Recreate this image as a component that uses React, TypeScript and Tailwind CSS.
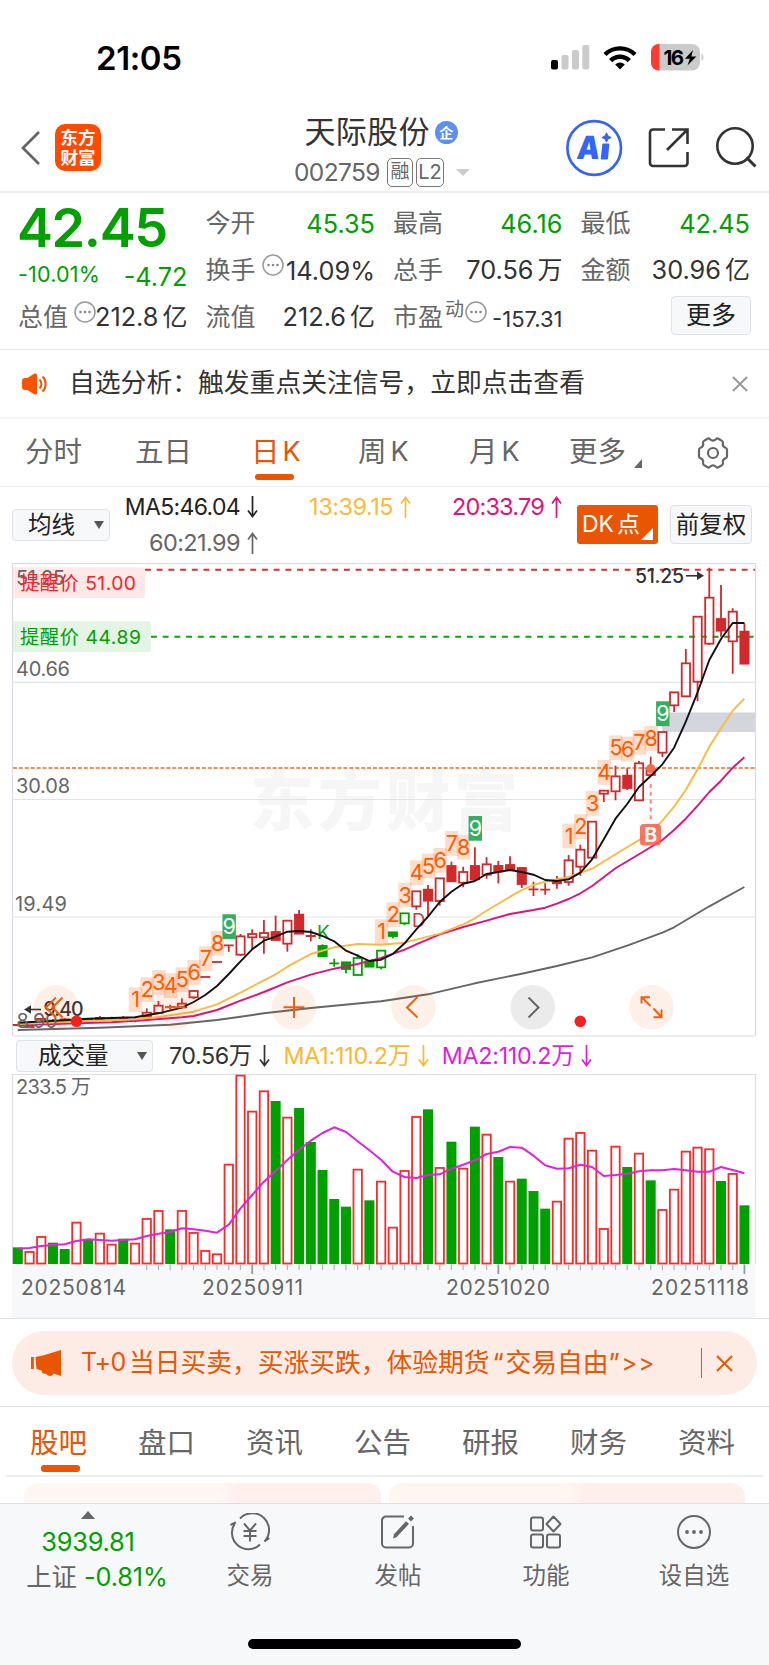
import React from "react";

const X0 = 17.8;
const STEP = 11.72;
const bx = (i: number) => X0 + STEP * i;

// G = filled green, R = outlined red; the number is the bar top in thirds of a px
const volumes: [string, number][] = [
  ["G", 547], ["R", 560], ["R", 515], ["G", 533], ["G", 552], ["R", 472], ["G", 523], ["R", 505], ["R", 538], ["G", 521],
  ["R", 535], ["R", 461], ["R", 437], ["G", 493], ["R", 437], ["R", 503], ["R", 557], ["R", 567], ["R", 298], ["R", 31],
  ["R", 139], ["R", 78], ["G", 108], ["R", 157], ["G", 129], ["G", 231], ["G", 315], ["G", 402], ["G", 425], ["R", 313],
  ["G", 406], ["R", 349], ["R", 487], ["R", 317], ["R", 155], ["G", 133], ["R", 308], ["G", 230], ["R", 310], ["G", 185],
  ["R", 208], ["G", 276], ["R", 349], ["G", 341], ["G", 378], ["G", 431], ["R", 409], ["R", 220], ["R", 203], ["R", 256],
  ["R", 491], ["R", 244], ["G", 306], ["R", 265], ["G", 346], ["R", 434], ["R", 373], ["R", 259], ["R", 247], ["R", 252],
  ["G", 348], ["R", 326], ["G", 421],
];

const volMa = [
  551, 549, 543, 540, 538, 528, 523, 525, 527, 525, 523, 513, 506, 501, 490, 493, 497, 503, 479, 430, 390, 350, 318, 285,
  254, 227, 204, 187, 201, 229, 256, 284, 320, 336, 339, 330, 328, 311, 299, 286, 267, 260, 246, 248, 272, 301, 311, 310,
  299, 306, 333, 330, 326, 319, 316, 316, 312, 316, 320, 320, 306, 315, 325,
];

type Candle = [number, "r" | "R" | "g" | "G" | "x" | "X", number, number, number, number];
// index, kind, body top, body bottom, wick top, wick bottom (thirds of a px from y=800)
const candles: Candle[] = [
  [0, "x", 675, 675, 672, 678], [1, "R", 675, 681, 675, 681], [2, "x", 657, 657, 654, 666], [3, "x", 662, 662, 657, 668],
  [4, "R", 658, 664, 655, 668], [5, "x", 664, 664, 660, 668], [6, "x", 660, 660, 656, 663], [7, "R", 654, 660, 648, 662],
  [8, "x", 656, 656, 650, 660], [9, "x", 654, 654, 648, 660], [10, "x", 661, 661, 655, 667],
  [11, "r", 638, 650, 625, 650], [12, "r", 617, 639, 603, 639], [13, "x", 621, 621, 614, 628], [14, "r", 611, 622, 595, 622],
  [15, "r", 573, 592, 570, 597], [16, "x", 531, 531, 531, 531], [17, "x", 486, 486, 486, 486], [18, "x", 436, 436, 436, 455],
  [19, "r", 409, 464, 402, 468], [20, "r", 402, 412, 388, 450], [21, "r", 399, 412, 360, 461], [22, "R", 396, 420, 347, 420],
  [23, "r", 362, 431, 362, 455], [24, "R", 344, 401, 330, 401], [25, "x", 408, 408, 388, 424], [26, "G", 438, 469, 433, 469],
  [27, "X", 490, 490, 476, 500], [28, "G", 487, 507, 487, 520], [29, "g", 474, 525, 463, 525], [30, "G", 484, 500, 484, 500],
  [31, "g", 452, 502, 452, 508], [32, "G", 397, 408, 397, 415], [33, "g", 340, 370, 340, 375], [34, "r", 274, 319, 274, 329],
  [35, "R", 269, 302, 255, 350], [36, "r", 235, 303, 235, 317], [37, "R", 198, 244, 185, 244], [38, "r", 216, 248, 200, 262],
  [39, "R", 198, 238, 142, 238], [40, "r", 193, 224, 172, 236], [41, "R", 198, 214, 183, 250], [42, "R", 195, 208, 169, 208],
  [43, "R", 204, 252, 202, 264], [44, "x", 268, 268, 245, 288], [45, "x", 269, 269, 250, 284], [46, "r", 246, 250, 228, 266],
  [47, "r", 181, 246, 165, 257], [48, "r", 149, 200, 134, 227], [49, "r", 65, 173, 65, 178], [50, "r", -28, -19, -28, 6],
  [51, "r", -71, -26, -103, 1], [52, "R", -73, -36, -95, -30], [53, "r", -110, 1, -117, 1], [54, "r", -93, -75, -130, -75],
  [55, "r", -204, -142, -204, -129], [56, "r", -323, -284, -323, -264], [57, "r", -410, -311, -453, -311],
  [58, "r", -550, -355, -550, -297], [59, "r", -607, -469, -697, -465], [60, "R", -543, -508, -645, -490],
  [61, "r", -565, -476, -575, -379], [62, "R", -505, -409, -530, -409],
];

// [bar index, y in thirds from 800, digit]
const marks: [number, number, string][] = [
  [10, 599, "1"], [11, 569, "2"], [12, 547, "3"], [13, 557, "4"], [14, 539, "5"], [15, 517, "6"], [16, 476, "7"], [17, 430, "8"], [18, 380, "9"],
  [31, 395, "1"], [32, 344, "2"], [33, 285, "3"], [34, 218, "4"], [35, 198, "5"], [36, 181, "6"], [37, 130, "7"], [38, 142, "8"], [39, 85, "9"],
  [47, 108, "1"], [48, 80, "2"], [49, 10, "3"], [50, -83, "4"], [51, -157, "5"], [52, -153, "6"], [53, -173, "7"], [54, -185, "8"], [55, -259, "9"],
];

const ma5: [number, number][] = [
  [0, 668], [4, 661], [6, 656], [8, 654], [10, 652], [12, 640], [14, 623], [15, 606], [16, 585], [17, 558], [18, 522], [19, 484], [20, 448],
  [21, 422], [22, 410], [23, 395], [24, 393], [25, 396], [26, 408], [27, 424], [28, 452], [29, 467], [30, 483], [31, 479], [32, 462], [33, 430],
  [34, 388], [35, 350], [36, 306], [37, 275], [38, 251], [39, 243], [40, 222], [41, 216], [42, 210], [43, 216], [44, 224], [45, 240], [46, 243],
  [47, 238], [48, 218], [49, 178], [50, 118], [51, 56], [52, 12], [53, -39], [54, -72], [55, -107], [56, -157], [57, -235], [58, -323],
  [59, -420], [60, -483], [61, -531], [62, -531],
];
const ma13: [number, number][] = [
  [0, 672], [6, 663], [10, 658], [12, 651], [15, 635], [17, 613], [19, 578], [21, 541], [22, 523], [23, 500], [25, 462], [27, 442], [29, 432],
  [31, 434], [33, 428], [36, 401], [38, 373], [39, 355], [40, 332], [42, 290], [43, 270], [44, 255], [45, 245], [47, 231], [49, 206], [51, 163],
  [53, 120], [54, 97], [55, 62], [56, 20], [57, -31], [58, -92], [59, -160], [60, -215], [61, -268], [62, -304],
];
const ma20: [number, number][] = [
  [0, 676], [5, 670], [8, 667], [11, 660], [14, 652], [15, 648], [17, 630], [19, 602], [21, 576], [23, 547], [25, 524], [27, 506], [29, 492],
  [31, 474], [33, 449], [34, 433], [36, 403], [38, 381], [40, 362], [42, 342], [44, 330], [45, 323], [46, 311], [47, 297], [48, 280], [49, 258],
  [51, 205], [53, 163], [55, 120], [56, 90], [57, 56], [58, 17], [59, -24], [60, -58], [61, -97], [62, -128],
];
const ma60: [number, number][] = [
  [0, 690], [7, 683], [13, 674], [17, 660], [19, 650], [21, 640], [25, 624], [31, 604], [35, 583], [39, 550], [43, 521], [46, 498], [49, 472],
  [52, 437], [55, 398], [56, 382], [59, 319], [62, 261],
];
const py = (v: number) => 800 + v / 3;
const line = (pts: [number, number][]) => pts.map(([i, v]) => `${bx(i).toFixed(1)},${py(v).toFixed(1)}`).join(" ");

function Label({ x, y, w, size = 20, fill = "#666", weight = 400, children }: { x: number; y: number; w: number; size?: number; fill?: string; weight?: number; children: string }) {
  return (
    <text x={x} y={y} fontSize={size} fill={fill} fontWeight={weight} textLength={w} lengthAdjust="spacing">
      {children}
    </text>
  );
}

function Candles() {
  return (
    <g strokeWidth={1.8}>
      {candles.map(([i, k, t, b, wt, wb]) => {
        const x = bx(i);
        const c = k === "g" || k === "G" || k === "X" ? "#00a000" : "#d02a2c";
        if (k === "x" || k === "X")
          return (
            <path key={i} stroke={c} fill="none" d={`M${x - 5} ${py(t)}h10M${x} ${py(wt)}V${py(wb)}`} />
          );
        const solid = k === "R" || k === "G";
        return (
          <g key={i} stroke={c} fill={solid ? c : "none"}>
            <path d={`M${x} ${py(wt)}V${py(t)}M${x} ${py(b)}V${py(wb)}`} />
            <rect x={x - 4.1} y={py(t)} width={8.3} height={py(b) - py(t)} />
          </g>
        );
      })}
    </g>
  );
}

function PriceChart() {
  return (
    <svg className="block h-[478px] w-full" viewBox="0 562 769 478" fontFamily="Inter, 'Noto Sans CJK SC', sans-serif">
      <text x={250} y={825} fontSize={64} fontWeight={900} fill="#f6f6f6" textLength={268}>东方财富</text>
      <path d="M12.5 563.5H755.5V1036H12.5Z" fill="none" stroke="#d9dce2" strokeWidth={1.2} />
      <path d="M12.5 682.3H755.5M12.5 799.5H755.5M12.5 917H755.5" stroke="#dfe4ec" strokeWidth={1.2} />
      <rect x={662} y={712.5} width={93} height={19.5} fill="#d3d6dc" />
      <Label x={16} y={585} w={49}>51.25</Label>
      <Label x={16} y={675.5} w={54}>40.66</Label>
      <Label x={16} y={793} w={54}>30.08</Label>
      <Label x={15} y={911} w={52}>19.49</Label>
      <path d="M13 567.2H142a3 3 0 0 1 3 3V595a3 3 0 0 1-3 3H13Z" fill="#ff2020" fillOpacity={0.1} />
      <path d="M13 621.2H148a3 3 0 0 1 3 3V649a3 3 0 0 1-3 3H13Z" fill="#00a000" fillOpacity={0.1} />
      <Label x={20} y={589.7} w={116} size={19.3} fill="#fa2323">提醒价 51.00</Label>
      <Label x={20} y={643.7} w={121} size={19.3} fill="#00a000">提醒价 44.89</Label>
      <path d="M145 569.7H755" stroke="#ee2528" strokeWidth={2} strokeDasharray="5.9 5.8" />
      <path d="M151 636.7H755" stroke="#12a012" strokeWidth={2} strokeDasharray="5.9 5.8" />
      <path d="M13 768H755" stroke="#f08f58" strokeWidth={2} strokeDasharray="4 1.9" />
      <Candles />
      {marks.map(([i, v, d]) => (
        <g key={`${i}`}>
          <rect x={bx(i) - 6.3} y={py(v) - 12.4} width={13.4} height={24.8} fill={d === "9" ? "#35ae60" : "#ff6a20"} fillOpacity={d === "9" ? 1 : 0.23} />
          <text x={bx(i) + 0.5} y={py(v) + 7.8} textAnchor="middle" fontSize={21.5} fill={d === "9" ? "#fff" : "#ff5a00"}>{d}</text>
        </g>
      ))}
      <text x={323.5} y={939} textAnchor="middle" fontSize={19} fill="#12a012">K</text>
      <text x={412} y={926.5} fontSize={18.5} fill="#d8343a">D</text>
      <circle cx={650.7} cy={768.7} r={4.6} fill="#fa6a4a" />
      <path d="M650.7 784V820" stroke="#f77f78" strokeWidth={1.8} strokeDasharray="4 3.8" />
      <g fill="none" strokeWidth={1.9} strokeLinejoin="round">
        <polyline points={line(ma60)} stroke="#666" />
        <polyline points={line(ma20)} stroke="#e0117f" />
        <polyline points={line(ma13)} stroke="#fdb93c" />
        <polyline points={line(ma5)} stroke="#111" />
      </g>
      <rect x={640} y={824} width={21} height={21.5} rx={3.5} fill="#ff5a46" fillOpacity={0.85} />
      <text x={650.7} y={841.5} textAnchor="middle" fontSize={19.5} fontWeight={700} fill="#fff">B</text>
      <Label x={635} y={583} w={49} size={19.5} fill="#333" weight={500}>51.25</Label>
      <path d="M686 575.8H699" stroke="#333" strokeWidth={1.6} />
      <path d="M697 571.5l7 4.3-7 4.3z" fill="#333" />
      <Label x={16.500} y={1028} w={41}>8.90</Label>
      <Label x={43.500} y={1016} w={40} size={19.5} fill="#333" weight={500}>9.40</Label>
      <path d="M30 1009.5H41" stroke="#333" strokeWidth={1.6} />
      <path d="M31 1005.3l-7 4.2 7 4.2z" fill="#333" />
      <g fill="#ea5504" fillOpacity={0.085}>
        <circle cx={56} cy={1007.3} r={22.3} />
        <circle cx={175.5} cy={1007.3} r={22.3} />
        <circle cx={294} cy={1007.3} r={22.3} />
        <circle cx={413.5} cy={1007.3} r={22.3} />
        <circle cx={651.5} cy={1007.3} r={22.3} />
      </g>
      <circle cx={532.7} cy={1007.3} r={22.3} fill="#ebebeb" />
      <g fill="none" stroke="#ee5f14" strokeWidth={2}>
        <path d="M56 997.5l-10 10 10 10M62.500 997.500l-10 10 10 10" />
        <path d="M165 1007.3h20M294 997v21M283.500 1007.300h21" />
        <path d="M417.500 997l-10.500 10.500 10.500 10" />
        <path d="M641.500 1003.500V997.200H650M642 997.500l8.500 8.500M653.500 1008.500l7.500 8M661.500 1009.500V1017.200H653.500" />
      </g>
      <path d="M528.500 997.500l10 10-10 10" fill="none" stroke="#666" strokeWidth={2} />
      <circle cx={76.5} cy={1021.3} r={5.8} fill="#f5201f" />
      <circle cx={580.3} cy={1021.3} r={5.8} fill="#f5201f" />
    </svg>
  );
}

function VolumeChart() {
  const vy = (v: number) => 1065 + v / 3;
  return (
    <svg className="block h-[245px] w-full" viewBox="0 1073 769 245" fontFamily="Inter, 'Noto Sans CJK SC', sans-serif">
      <rect x={12} y={1264} width={743.5} height={54} fill="#f7f8fa" />
      <path d="M12.500 1264V1074.500H755.500V1264" fill="none" stroke="#dcdee2" strokeWidth={1.2} />
      <Label x={16} y={1094} w={75} size={20}>233.5 万</Label>
      {volumes.map(([k, v], i) =>
        k === "G" ? (
          <rect key={i} x={bx(i) - 5} y={vy(v)} width={10} height={1264 - vy(v)} fill="#00a000" />
        ) : (
          <rect key={i} x={bx(i) - 4.2} y={vy(v) + 0.3} width={8.4} height={1263.2 - vy(v)} fill="#fff" stroke="#f92a2a" strokeWidth={1.8} />
        ),
      )}
      {volumes.map((_, i) => {
        if (i < 11) return null;
        const major = i === 20 || i === 41 || i === 62;
        return <path key={i} d={`M${bx(i)} 1264.500v${major ? 9.5 : 5.5}`} stroke={major ? "#999" : "#b5b5b5"} strokeWidth={major ? 1.8 : 1.2} />;
      })}
      <polyline points={volMa.map((v, i) => `${bx(i).toFixed(1)},${vy(v).toFixed(1)}`).join(" ")} fill="none" stroke="#e022dc" strokeWidth={2} strokeLinejoin="round" />
      <Label x={21} y={1295} w={105} size={21}>20250814</Label>
      <Label x={202} y={1295} w={101} size={21}>20250911</Label>
      <Label x={446} y={1295} w={104} size={21}>20251020</Label>
      <Label x={651} y={1295} w={98} size={21}>20251118</Label>
    </svg>
  );
}

function Dots() {
  return (
    <svg className="h-[22px] w-[22px] shrink-0" viewBox="0 0 22 22">
      <circle cx="11" cy="11" r="10" fill="none" stroke="#999" strokeWidth="1.500" />
      <g fill="#888">
        <circle cx="6.500" cy="11" r="1.300" />
        <circle cx="11" cy="11" r="1.300" />
        <circle cx="15.500" cy="11" r="1.300" />
      </g>
    </svg>
  );
}

function Cell({ label, value, unit, green, extra }: { label: string; value: string; unit?: string; green?: boolean; extra?: React.ReactNode }) {
  return (
    <div className="flex h-[47px] items-center text-[25.300px]">
      <span className="-ml-px w-[50px] shrink-0 text-[25px] text-[#666]">{label}</span>
      {extra}
      <span className={green ? "ml-auto text-[#00a000]" : "ml-auto text-[#333]"}>
        {value}
        {unit && <span className="ml-[4px] text-[25px]">{unit}</span>}
      </span>
    </div>
  );
}

function StatusBar() {
  return (
    <div className="flex h-[115px] items-center pr-[65px] pl-[96px]">
      <span className="mt-[2px] text-[33px] font-semibold tracking-[-0.400px] text-black">21:05</span>
      <svg className="-mt-px ml-auto h-[28px] w-[154px]" viewBox="550 43 154 28">
        <rect x="551" y="60" width="7" height="9.500" rx="2" />
        <g fill="#cbcbcb">
          <rect x="561.500" y="55" width="7" height="14.500" rx="2" />
          <rect x="572" y="50" width="7" height="19.500" rx="2" />
          <rect x="582.300" y="45" width="7" height="24.500" rx="2" />
        </g>
        <g fill="none" stroke="#000" strokeWidth="4.400">
          <path d="M605 54.500a21.500 21.500 0 0 1 30 0" />
          <path d="M610.700 60.600a13 13 0 0 1 18.600 0" />
        </g>
        <path d="M615.200 64.500a7 7 0 0 1 9.600 0L620 69.500z" />
        <rect x="651" y="44" width="49" height="26.500" rx="8" fill="#cbcbcb" />
        <path d="M659.500 44v26.500H659a8 8 0 0 1-8-8V52a8 8 0 0 1 8-8z" fill="#ff3b30" />
        <path d="M701.500 53.500c2.600 1.500 2.600 6 0 7.500z" fill="#cbcbcb" />
        <text x="663.500" y="64.500" fontSize="20.500" fontWeight="700" fontFamily="Inter, sans-serif" textLength="20.500">16</text>
        <path d="M693 50l-8 8.800h4.800l-2.300 6.700 8.800-9h-5z" />
      </svg>
    </div>
  );
}

function Header() {
  return (
    <header className="flex h-[78px] border-b-2 border-[#eee]">
      <svg className="mt-[15px] ml-[20px] h-[36px] w-[22px]" viewBox="0 0 22 36" fill="none" stroke="#666" strokeWidth="2.800">
        <path d="M19 2L3 18L19 34" />
      </svg>
      <div className="mt-[9px] ml-[13px] flex h-[47px] w-[46px] flex-col items-center justify-center rounded-[10px] bg-[#ff4a00] text-[17.500px] leading-[20px] font-bold text-white">
        <span>东方</span>
        <span>财富</span>
      </div>
      <div className="ml-[177px] flex w-[212px] flex-col items-center">
        <div className="flex h-[34px] w-[159px] items-center gap-[5px] text-[31px] tracking-[0.300px] whitespace-nowrap text-[#333]">
          <span>天际股份</span>
          <span className="flex h-[23px] w-[23px] items-center justify-center rounded-full bg-[#5b8ff0] text-[14px] font-bold tracking-normal text-white">企</span>
        </div>
        <div className="mt-[8px] flex h-[30px] w-[180px] items-center text-[#666]">
          <span className="w-[93px] text-[24.500px] tracking-[-0.600px]">002759</span>
          <span className="flex h-[29px] w-[26px] items-center justify-center rounded-[5px] border-[1.500px] border-[#777] text-[19px]">融</span>
          <span className="ml-[3px] flex h-[29px] w-[28px] items-center justify-center rounded-[5px] border-[1.500px] border-[#777] text-[20px]">L2</span>
          <svg className="ml-[12px] h-[7px] w-[14px]" viewBox="0 0 14 7"><path d="M0 0h14L7 7z" fill="#ccc" /></svg>
        </div>
      </div>
      <svg className="mt-[3px] ml-auto h-[62px] w-[203px]" viewBox="566 118 203 62">
        <circle cx="594.200" cy="148" r="26.800" fill="none" stroke="#3565f6" strokeWidth="2.700" />
        <text transform="translate(576 158.500) skewX(-6)" fontSize="32" fontWeight="900" fill="#3565f6" fontFamily="Inter, sans-serif" textLength="23" lengthAdjust="spacingAndGlyphs">A</text>
        <path d="M602.300 144.500a1 1 0 0 1 1-1h5a1 1 0 0 1 1 1l-1.300 14a1.200 1.200 0 0 1-1.200 1h-5a1 1 0 0 1-1-1z" fill="#3565f6" />
        <path d="M606.500 132.800l1.500 3.200 3.200 1.500-3.200 1.500-1.500 3.200-1.500-3.200-3.200-1.500 3.200-1.500z" fill="#3565f6" stroke="#3565f6" />
        <g fill="none" stroke="#333" strokeWidth="2.600">
          <path d="M665 129.500H653a3 3 0 0 0-3 3V163a3 3 0 0 0 3 3H684.500a3 3 0 0 0 3-3V152M672 129.500H687.500V144M686.500 130.500L667 150" />
          <circle cx="735" cy="146" r="17.700" />
          <path d="M746.500 157.500l9 9" strokeWidth="3" />
        </g>
      </svg>
    </header>
  );
}

function Quote() {
  return (
    <section className="grid h-[157px] grid-cols-4 gap-x-[19px] border-b border-[#e9eaec] px-[19px] pt-[7px] whitespace-nowrap">
      <div className="-mt-[1px]">
        <div className="-ml-[2px] flex h-[56px] items-center text-[54px] font-semibold tracking-[-1.400px] text-[#00a000]">42.45</div>
        <div className="flex h-[39px] items-center justify-between text-[#00a000]">
          <span className="-ml-px text-[21.500px] tracking-[0.200px]">-10.01%</span>
          <span className="mt-1 text-[25.300px]">-4.72</span>
        </div>
        <Cell label="总值" value="212.8" unit="亿" extra={<span className="-mt-[11px] -mr-[4px] ml-[6px] flex"><Dots /></span>} />
      </div>
      <div>
        <Cell label="今开" value="45.35" green />
        <Cell label="换手" value="14.09%" extra={<span className="-mt-[11px] -mr-[4px] ml-[6px] flex"><Dots /></span>} />
        <Cell label="流值" value="212.6" unit="亿" />
      </div>
      <div>
        <Cell label="最高" value="46.16" green />
        <Cell label="总手" value="70.56" unit="万" />
        <div className="flex h-[47px] items-center">
          <span className="-ml-px text-[25px] text-[#666]">市盈</span>
          <span className="-mt-[15px] ml-[2px] text-[19px] text-[#666]">动</span>
          <span className="-mt-[11px] ml-[1px] flex"><Dots /></span>
          <span className="mt-[4px] ml-auto text-[22px] text-[#333]">-157.31</span>
        </div>
      </div>
      <div>
        <Cell label="最低" value="42.45" green />
        <Cell label="金额" value="30.96" unit="亿" />
        <div className="mt-[2px] -mr-px ml-auto flex h-[39px] w-[80px] items-center justify-center rounded-[4px] border-[1.500px] border-[#dfe2e8] bg-[#f7f8fa] text-[25px] text-[#222]">更多</div>
      </div>
    </section>
  );
}

function Notice() {
  return (
    <section className="flex h-[69px] items-center border-b-2 border-[#f4f4f5] pr-[21px] pl-[22px]">
      <svg className="h-[22px] w-[26px]" viewBox="0 0 26 22">
        <path d="M0 8a3 3 0 0 1 3-3H5.500L12 .8C13.500 0 15 .5 15 2v18c0 1.500-1.500 2-3 1.200L5.500 17H3a3 3 0 0 1-3-3z" fill="#fb5200" />
        <path d="M17.500 6.500c2.500 2.500 2.500 6.500 0 9M20.500 3.500c4.200 4 4.200 11 0 15" fill="none" stroke="#fb5200" strokeWidth="2" />
      </svg>
      <span className="ml-[21px] text-[25.800px] text-[#333]">自选分析：触发重点关注信号，立即点击查看</span>
      <svg className="ml-auto h-[16px] w-[16px]" viewBox="0 0 16 16" stroke="#999" strokeWidth="2">
        <path d="M1 1l14 14M15 1L1 15" />
      </svg>
    </section>
  );
}

function PeriodTabs() {
  return (
    <nav className="flex h-[68px] items-center border-b border-[#ebecee] pl-[25px] text-[28.500px] text-[#666]">
      <span className="w-[110px]">分时</span>
      <span className="w-[116px]">五日</span>
      <span className="relative flex w-[107px] gap-[3px] text-[#ea5504]">
        <span>日</span><span className="text-[27px] leading-[42px]">K</span>
        <span className="absolute top-[43px] left-[4px] h-[6px] w-[39px] rounded-[3px] bg-[#ea5504]" />
      </span>
      <span className="flex w-[111px] gap-[4px]"><span>周</span><span className="text-[27px] leading-[42px]">K</span></span>
      <span className="flex w-[100px] gap-[4px]"><span>月</span><span className="text-[27px] leading-[42px]">K</span></span>
      <span>更多</span>
      <svg className="mt-[21px] ml-[8px] h-[9px] w-[8px]" viewBox="0 0 8 9"><path d="M8 0v9H0z" fill="#666" /></svg>
      <svg className="ml-[54px] h-[32px] w-[34px]" viewBox="0 0 34 32" fill="none" stroke="#666" strokeWidth="2.200" strokeLinejoin="round">
        <path d="M11.500 1.800Q13 1 14 2.200Q17 5 20 2.200Q21 1 22.500 1.800L26 3.900Q27.300 4.800 26.900 6.500Q26.300 9.500 29.500 10.800Q31 11.300 31 12.800V19.200Q31 20.700 29.500 21.200Q26.300 22.500 26.900 25.500Q27.300 27.200 26 28.100L22.500 30.200Q21 31 20 29.800Q17 27 14 29.800Q13 31 11.500 30.200L8 28.100Q6.700 27.200 7.100 25.500Q7.700 22.500 4.500 21.200Q3 20.700 3 19.200V12.800Q3 11.300 4.500 10.800Q7.700 9.500 7.100 6.500Q6.700 4.800 8 3.900Z" />
        <circle cx="17" cy="16" r="5" />
      </svg>
    </nav>
  );
}

function Arrow({ up }: { up?: boolean }) {
  return (
    <svg className="ml-[7px] h-[22px] w-[11px] shrink-0" viewBox="0 0 11 22" fill="none" stroke="currentColor" strokeWidth="1.700">
      {up ? <path d="M5.500 22V1.500M1 7.500L5.500 1.500L10 7.500" /> : <path d="M5.500 0v20.500M1 14.500l4.500 6 4.500-6" />}
    </svg>
  );
}

function Caret() {
  return <svg className="ml-auto h-[8px] w-[10px]" viewBox="0 0 10 8"><path d="M0 0h10L5 8z" fill="#555" /></svg>;
}

function Averages() {
  return (
    <section className="flex h-[75px] pl-[12px] text-[23px] whitespace-nowrap">
      <div className="mt-[22px] flex h-[32px] w-[98px] items-center rounded-[4px] border-[1.500px] border-[#dfe2e8] bg-[#f7f8fa] pr-[5px] pl-[15px] text-[23.500px] text-[#222]">
        均线<Caret />
      </div>
      <div className="ml-[16px] w-[132px]">
        <div className="mt-[2px] flex h-[36px] items-center justify-end tracking-[-0.650px] text-[#222]">MA5:46.04<Arrow /></div>
        <div className="flex h-[36px] items-center justify-end text-[23.500px] tracking-[-0.600px] text-[#666]">60:21.99<Arrow up /></div>
      </div>
      <div className="mt-[2px] flex h-[36px] w-[153px] items-center justify-end text-[23.500px] tracking-[-0.500px] text-[#fdb93c]">13:39.15<Arrow up /></div>
      <div className="mt-[2px] flex h-[36px] w-[151px] items-center justify-end text-[23.500px] tracking-[-0.800px] text-[#e0117f]">20:33.79<Arrow up /></div>
      <div className="relative mt-[18px] ml-[15px] flex h-[39px] w-[81px] items-center rounded-[3px] bg-[#ea5504] pl-[5px] text-white">
        DK<span className="ml-[3px]">点</span>
        <svg className="absolute right-[5px] bottom-[4px] h-[12px] w-[12px]" viewBox="0 0 12 12"><path d="M12 0v12H0z" fill="#fff" /></svg>
      </div>
      <div className="mt-[18px] ml-[12px] flex h-[39px] w-[82px] items-center justify-center rounded-[4px] border-[1.500px] border-[#dfe2e8] bg-[#f7f8fa] text-[23.500px] text-[#222]">前复权</div>
    </section>
  );
}

function VolumeHeader() {
  return (
    <div className="flex h-[33px] items-center pl-[16px] text-[23.300px] whitespace-nowrap">
      <div className="-mt-[2px] flex h-[32px] w-[137px] items-center rounded-[4px] border-[1.500px] border-[#dfe2e8] bg-[#f7f8fa] pr-[5px] pl-[21px] text-[23.500px] text-[#222]">
        成交量<Caret />
      </div>
      <div className="-mt-[1px] ml-[16px] flex items-center tracking-[-0.450px] text-[#333]">70.56万<Arrow /></div>
      <div className="-mt-[1px] ml-[14px] flex items-center tracking-[-0.250px] text-[#fdb72f]">MA1:110.2万<Arrow /></div>
      <div className="-mt-[1px] ml-[13px] flex items-center tracking-[-0.300px] text-[#e01ee0]">MA2:110.2万<Arrow /></div>
    </div>
  );
}

function Banner() {
  return (
    <section className="h-[89px] border-y-[1.500px] border-[#e2e3e7] px-[12px] pt-[12px]">
      <div className="flex h-[64px] items-center rounded-full bg-[#fdece5] pr-[24px] pl-[19px] whitespace-nowrap text-[#ea5504]">
        <svg className="h-[28px] w-[30px] shrink-0" viewBox="0 0 30 28" fill="#ea5504">
          <path d="M0 8h2.800v12H0zM4.500 8L12 6.500 30 1v26l-7.500-2.500c-1 2.500-3.500 3-5.500 2-1-.5-1.300-1-1.800-1.800-2.700.5-4.200-.7-4.700-3.200L5.500 20z" />
        </svg>
        <span className="ml-[20px] w-[44px] text-[25px] tracking-[-0.700px]">T+0</span>
        <span className="ml-[4px] text-[25.750px]">当日买卖，买涨买跌，体验期货<span className="ml-[3px] inline-block w-[13px] font-[Inter]">“</span>交易自由<span className="inline-block w-[13px] font-[Inter]">”</span></span>
        <span className="text-[24px] tracking-[1px]">&gt;&gt;</span>
        <span className="ml-auto h-[30px] w-[1.500px] bg-[#ea5504]" />
        <svg className="ml-[14px] h-[17px] w-[17px]" viewBox="0 0 17 17" stroke="#ea5504" strokeWidth="1.900"><path d="M1 1l15 15M16 1L1 16" /></svg>
      </div>
    </section>
  );
}

function ContentTabs() {
  const tabs = ["股吧", "盘口", "资讯", "公告", "研报", "财务", "资料"];
  return (
    <section className="h-[96px] px-[6px]">
      <nav className="flex h-[70px] border-b-2 border-[#efeff0] pl-[24px] text-[28.500px] text-[#666]">
        {tabs.map((t, i) => (
          <span key={t} className={i === 0 ? "relative w-[108px] shrink-0 pt-[15px] leading-[42px] text-[#ea5504]" : "w-[108px] shrink-0 pt-[15px] leading-[42px]"}>
            {t}
            {i === 0 && <span className="absolute top-[58px] left-[11px] h-[7px] w-[39px] rounded-[3px] bg-[#ea5504]" />}
          </span>
        ))}
      </nav>
      <div className="mt-[6px] flex h-[20px] gap-[8px] pr-[18px] pl-[18px]">
        <div className="flex-1 rounded-t-[14px] bg-gradient-to-r from-[#fff7f3] from-55% to-[#fff0ed] to-60%" />
        <div className="flex-1 rounded-t-[14px] bg-gradient-to-r from-[#fff6f2] from-50% to-[#ffefec] to-55%" />
      </div>
    </section>
  );
}

function BottomBar() {
  const items: [string, React.ReactNode][] = [
    ["交易", <g key="a"><path d="M10 5.500A16.500 16.500 0 0 1 34.500 28.500l4.800-3.500M30 31.500A16.500 16.500 0 0 1 5.500 9.500l-5 2.500" /><path d="M14 10.500l6 7 6-7M20 17.500v11M13.500 18h13M13.500 23h13" /></g>],
    ["发帖", <g key="b"><path d="M26 3.500H8a4 4 0 0 0-4 4v23a4 4 0 0 0 4 4h23a4 4 0 0 0 4-4V13" /><path d="M17 23L29.500 9.500" strokeWidth="4" /><path d="M15 25.500l1-4 3 2.500z" fill="#666" stroke="none" /><path d="M31.500 7L34.500 4" strokeWidth="4" /></g>],
    ["功能", <g key="c"><rect x="5" y="4.500" width="12" height="13" rx="2" /><rect x="5" y="21.500" width="12" height="13" rx="2" /><rect x="21" y="21.500" width="13" height="13" rx="2" /><path d="M27.500 3.500l7 7.500-7 7.500-7-7.500z" strokeLinejoin="round" /></g>],
    ["设自选", <g key="d"><circle cx="20" cy="19" r="16" /><g fill="#666" stroke="none"><circle cx="13" cy="19" r="1.900" /><circle cx="20" cy="19" r="1.900" /><circle cx="27" cy="19" r="1.900" /></g></g>],
  ];
  return (
    <footer className="h-[162px] border-t-[1.500px] border-[#dfe0e4] bg-[#f7f8fa]">
      <div className="flex h-[135px] whitespace-nowrap">
        <div className="flex w-[176px] flex-col items-center">
          <svg className="mt-[7px] h-[8px] w-[14px]" viewBox="0 0 14 8"><path d="M7 0l7 8H0z" fill="#666" /></svg>
          <span className="mt-[6px] text-[25.500px] leading-[34px] tracking-[-0.300px] text-[#00a000]">3939.81</span>
          <span className="ml-[18px] flex h-[35px] items-center text-[25.300px] text-[#666]">
            上证<span className="ml-[7px] tracking-[-0.100px] text-[#00a000]">-0.81%</span>
          </span>
        </div>
        {items.map(([t, icon]) => (
          <div key={t} className="flex w-[148px] flex-col items-center text-[#666]">
            <svg className="mt-[9px] h-[40px] w-[40px]" viewBox="0 0 40 40" fill="none" stroke="#666" strokeWidth="2">{icon}</svg>
            <span className="mt-[5px] text-[23.500px] leading-[35px]">{t}</span>
          </div>
        ))}
      </div>
      <div className="mx-auto h-[10px] w-[273px] rounded-full bg-black" />
    </footer>
  );
}

export default function App() {
  return (
    <div className="h-[1665px] w-[769px] overflow-hidden bg-white font-[Inter,'Noto_Sans_CJK_SC',sans-serif]">
      <StatusBar />
      <Header />
      <Quote />
      <Notice />
      <PeriodTabs />
      <Averages />
      <PriceChart />
      <VolumeHeader />
      <VolumeChart />
      <Banner />
      <ContentTabs />
      <BottomBar />
    </div>
  );
}
